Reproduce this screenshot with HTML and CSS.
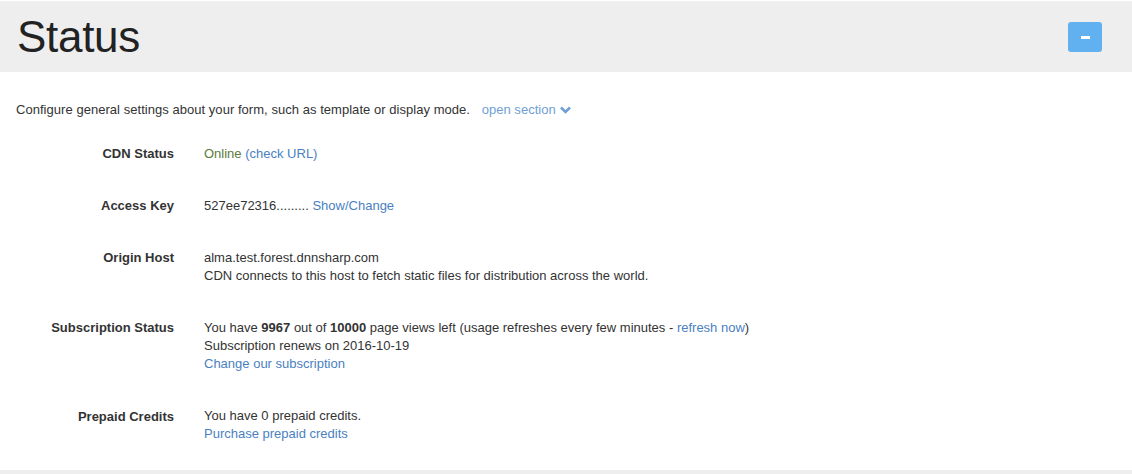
FILE: index.html
```html
<!DOCTYPE html>
<html>
<head>
<meta charset="utf-8">
<link rel="stylesheet" href="styles.css">
</head>
<body>
<div class="page">
  <header class="head">
    <h1 class="title">Status</h1>
    <button class="toggle" type="button"><span class="minus"></span></button>
  </header>
  <p class="intro">Configure general settings about your form, such as template or display mode. <a class="open" href="#">open section <svg class="chev" width="11" height="8" viewBox="0 0 11 8"><path d="M1 1.5 L5.5 6 L10 1.5" fill="none" stroke="currentColor" stroke-width="2.6"/></svg></a></p>
  <div class="rows">
    <div class="label">CDN Status</div>
    <div class="value"><span class="ok">Online</span> <a href="#">(check URL)</a></div>

    <div class="label">Access Key</div>
    <div class="value">527ee72316......... <a href="#">Show/Change</a></div>

    <div class="label">Origin Host</div>
    <div class="value">alma.test.forest.dnnsharp.com<br>CDN connects to this host to fetch static files for distribution across the world.</div>

    <div class="label">Subscription Status</div>
    <div class="value">You have <b>9967</b> out of <b>10000</b> page views left (usage refreshes every few minutes - <a href="#">refresh now</a>)<br>Subscription renews on 2016-10-19<br><a href="#">Change our subscription</a></div>

    <div class="label prepaid">Prepaid Credits</div>
    <div class="value">You have 0 prepaid credits.<br><a href="#">Purchase prepaid credits</a></div>
  </div>
  <div class="foot"></div>
</div>
</body>
</html>
```
FILE: styles.css
```css
html, body {
  margin: 0;
  padding: 0;
  background: #fff;
}
body {
  font-family: "Liberation Sans", Arial, sans-serif;
  font-size: 13px;
  line-height: 18px;
  color: #333;
}
.page {
  padding-top: 1px;
  height: 473px;
  display: flex;
  flex-direction: column;
}
.head {
  height: 71px;
  background: #eeeeee;
  display: flex;
  align-items: center;
  justify-content: space-between;
  padding: 0 30px 0 17px;
}
.title {
  margin: 0;
  font-weight: normal;
  font-size: 44px;
  line-height: 50px;
  color: #222;
  letter-spacing: -0.3px;
}
.toggle {
  width: 34px;
  height: 30px;
  border: 0;
  border-radius: 3px;
  background: #61b1f1;
  display: flex;
  align-items: center;
  justify-content: center;
  padding: 0;
  margin-top: 1px;
}
.minus {
  width: 9px;
  height: 3px;
  background: #fff;
}
.intro {
  margin: 29px 0 0 16px;
  letter-spacing: 0.04px;
}
a {
  color: #4a7fc1;
  text-decoration: none;
}
.open {
  color: #6f9fd6;
  margin-left: 8px;
}
.chev {
  vertical-align: 0px;
}
.rows {
  margin-top: 26px;
  display: grid;
  grid-template-columns: 174px 1fr;
  column-gap: 30px;
  row-gap: 34px;
}
.label {
  text-align: right;
  font-weight: bold;
  color: #333;
}
.prepaid {
  margin-top: 1px;
}
.value b {
  color: #333;
}
.ok {
  color: #5b7a3c;
}
.foot {
  margin-top: auto;
  height: 4px;
  background: #eeeeee;
}
```
